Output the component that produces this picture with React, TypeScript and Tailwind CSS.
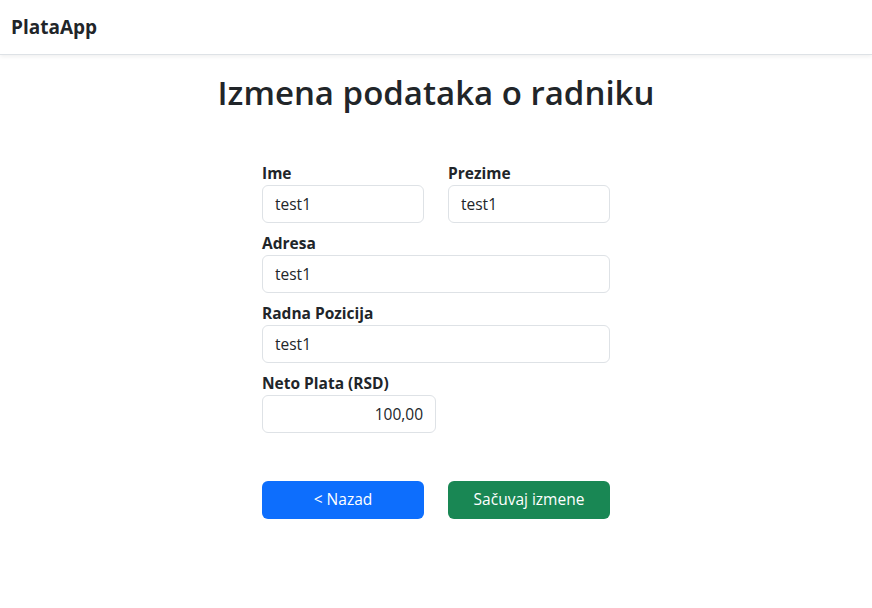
import React from 'react';

interface FieldProps {
  label: string;
  value: string;
  right?: boolean;
}

const Field: React.FC<FieldProps> = ({ label, value, right }) => (
  <div className="flex flex-col">
    <label className="text-[15.5px] font-bold leading-6 text-[#212529]">{label}</label>
    <input
      readOnly
      value={value}
      className={`h-[38px] w-full rounded-[6px] border border-[#dee2e6] bg-white px-3 text-[15.5px] text-[#212529] outline-none ${right ? 'text-right' : ''}`}
    />
  </div>
);

export default function App() {
  return (
    <div className="min-h-[608px] bg-white font-['Open_Sans',sans-serif] text-[#212529]">
      <nav className="flex h-[55px] items-center border-b border-[#dee2e6] px-[11px] shadow-[0_2px_4px_rgba(0,0,0,0.06)]">
        <span className="text-[19px] font-bold leading-[30px]">PlataApp</span>
      </nav>

      <h1 className="mt-[17px] text-center text-[33px] font-semibold leading-[42px]">
        Izmena podataka o radniku
      </h1>

      <div className="mx-auto mt-[47px] w-[348px]">
        <div className="grid grid-cols-2 gap-6">
          <Field label="Ime" value="test1" />
          <Field label="Prezime" value="test1" />
        </div>
        <div className="mt-2">
          <Field label="Adresa" value="test1" />
        </div>
        <div className="mt-2">
          <Field label="Radna Pozicija" value="test1" />
        </div>
        <div className="mt-2 w-[174px]">
          <Field label="Neto Plata (RSD)" value="100,00" right />
        </div>

        <div className="mt-12 grid grid-cols-2 gap-6">
          <button className="h-[38px] rounded-[6px] bg-[#0d6efd] text-[15.5px] text-white">&lt; Nazad</button>
          <button className="h-[38px] rounded-[6px] bg-[#198754] text-[15.5px] text-white">Sačuvaj izmene</button>
        </div>
      </div>
    </div>
  );
}
